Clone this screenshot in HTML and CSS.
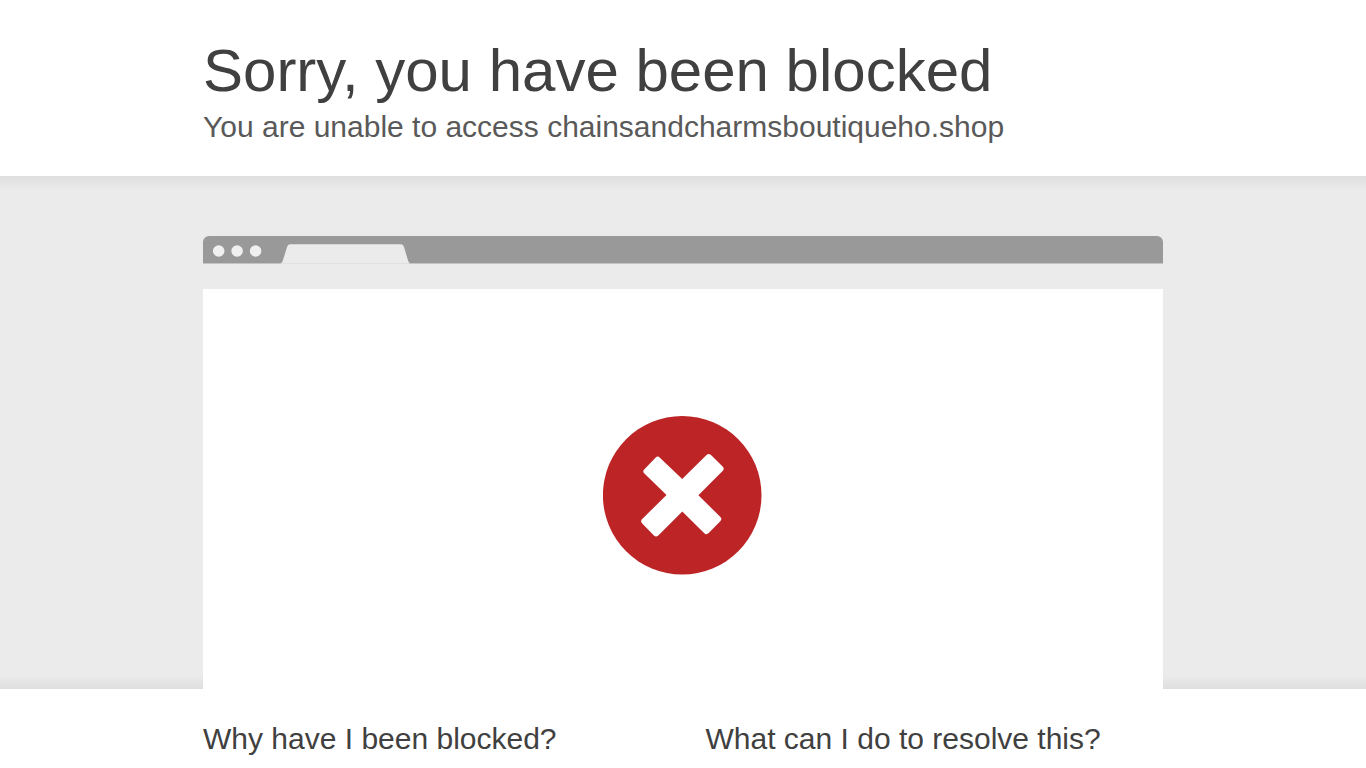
FILE: index.html
```html
<!DOCTYPE html>
<html lang="en">
<head>
<meta charset="utf-8">
<meta name="viewport" content="width=device-width, initial-scale=1">
<title>Sorry, you have been blocked</title>
<link rel="stylesheet" href="styles.css">
</head>
<body>
<header class="wrapper header">
  <h1 class="title">Sorry, you have been blocked</h1>
  <h2 class="subtitle">You are unable to access chainsandcharmsboutiqueho.shop</h2>
</header>
<main>
  <section class="highlight">
    <div class="wrapper">
      <div class="browser-bar">
        <svg width="220" height="28" viewBox="0 0 220 28" aria-hidden="true">
          <g fill="#f0f0f0"><circle cx="15.7" cy="15" r="5.8"/><circle cx="34.1" cy="15" r="5.8"/><circle cx="52.6" cy="15" r="5.8"/></g>
          <path fill="#ebebeb" d="M77.500 27.300Q79 27 79.700 25L84 11Q84.900 8.300 87 8.300H198.200Q200.200 8.300 201 11L205.200 25Q205.800 27 207.200 27.300Z"/>
          <path fill="#e0e0e0" d="M78 27H206V28H78Z"/>
        </svg>
      </div>
      <div class="browser-page">
        <svg width="160" height="160" viewBox="0 0 160 160" role="img" aria-label="Blocked">
          <circle cx="79.2" cy="80.2" r="79.3" fill="#bd2426"/>
          <path fill="#fff" d="M79.2 64L103.500 40Q105.700 38 108 40L119.600 51.500Q121.800 53.700 119.600 56L95.400 80.200L117.400 102Q119.400 104.100 117.300 106.300L105.700 118Q103.500 120.200 101.300 118.200L79.300 96.500L55.300 120.500Q53.100 122.700 50.900 120.500L39.200 108.400Q37 106.200 39.200 104L63.500 80L41.400 58.600Q39.200 56.400 41.400 54.200L52.500 42.700Q54.700 40.500 56.900 42.700Z"/>
        </svg>
      </div>
    </div>
  </section>
  <section class="wrapper columns">
    <h2 class="question">Why have I been blocked?</h2>
    <h2 class="question">What can I do to resolve this?</h2>
  </section>
</main>
</body>
</html>
```
FILE: styles.css
```css
* { box-sizing: border-box; }

body {
  margin: 0;
  background: #fff;
  color: #404040;
  font-family: "Liberation Sans", Arial, sans-serif;
}

.wrapper {
  width: 90%;
  max-width: 960px;
  margin: 0 auto;
}

.header { padding: 35px 0 30px; }

.title,
.subtitle,
.question {
  margin: 0;
  font-weight: 400;
}

.title {
  font-size: 60px;
  line-height: 72px;
}

.subtitle,
.question {
  font-size: 30px;
  line-height: 39px;
}

.subtitle { color: #595959; }

.highlight {
  padding-top: 60px;
  background:
    linear-gradient(to bottom, #dedede, #ebebeb 14px, transparent 14px),
    linear-gradient(to top, #dedede, #ebebeb 14px);
}

.browser-bar {
  border-radius: 6px 6px 0 0;
  background: linear-gradient(to top, #c4c4c4 1px, #999 1px);
  overflow: hidden;
}

.browser-bar svg { display: block; }

.browser-page {
  display: flex;
  justify-content: center;
  margin-top: 25px;
  padding: 126px 0 114px;
  background: #fff;
}

.columns {
  display: grid;
  grid-template-columns: 1fr 1fr;
  gap: 45px;
  padding: 30px 0;
}
```
